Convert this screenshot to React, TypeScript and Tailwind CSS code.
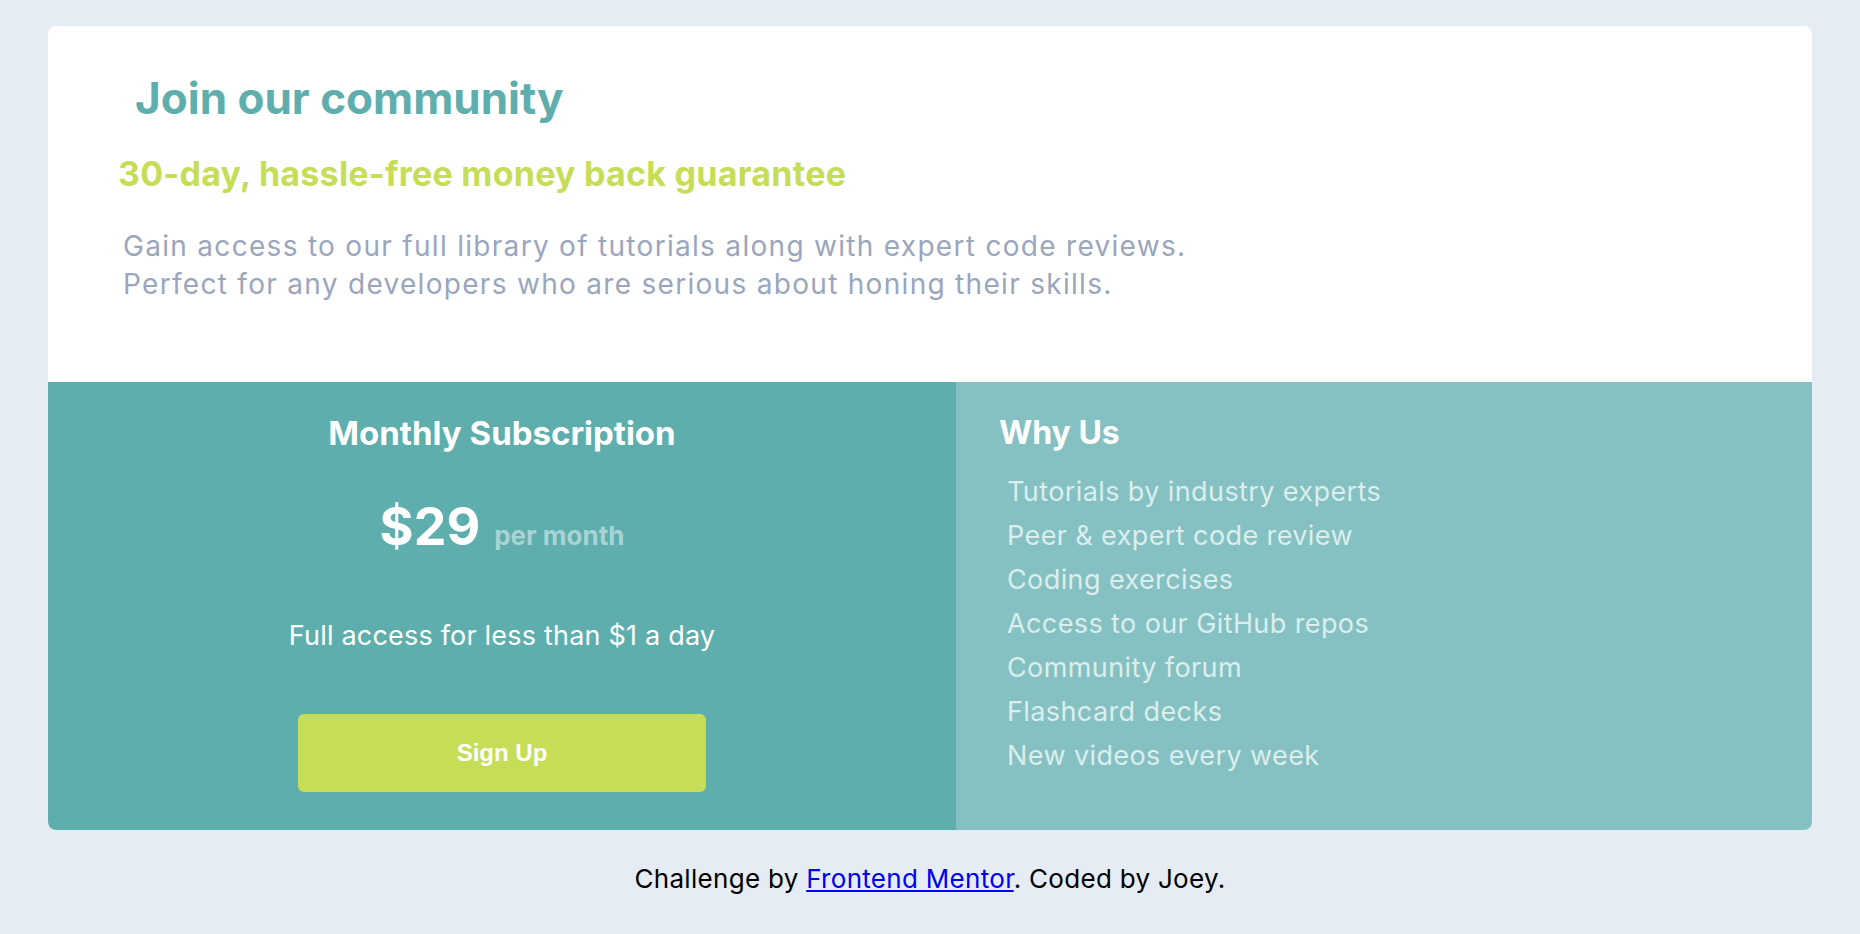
const perks = [
  'Tutorials by industry experts',
  'Peer & expert code review',
  'Coding exercises',
  'Access to our GitHub repos',
  'Community forum',
  'Flashcard decks',
  'New videos every week',
];

const App = () => {
  return (
    <div className="min-h-screen bg-[#e5ecf4] pt-[26px] font-['Inter',sans-serif]">
      <main className="mx-12 overflow-hidden rounded-lg bg-white">
        {/* top intro block */}
        <section className="pt-[46px] pb-[79px]">
          <h1 className="pl-[87px] text-[44px] leading-[53px] font-bold text-[#5eaead]">
            Join our community
          </h1>
          <h2 className="mt-[29px] pl-[70px] text-[34px] leading-[40px] font-bold tracking-[0.25px] text-[#c6dd58]">
            30-day, hassle-free money back guarantee
          </h2>
          <p className="mt-[33px] pl-[75px] text-[28px] leading-[38px] tracking-[1.3px] text-[#9aa6bd]">
            Gain access to our full library of tutorials along with expert code reviews.
            <br />
            Perfect for any developers who are serious about honing their skills.
          </p>
        </section>

        <div className="flex">
          {/* subscription */}
          <section className="flex w-[908px] flex-col items-center bg-[#5eaead] pt-[31px] pb-[38px] text-white">
            <h3 className="text-[33px] leading-[40px] font-bold">Monthly Subscription</h3>
            <div className="mt-[44px] flex items-baseline">
              <span className="text-[52px] leading-[60px] font-bold">$29</span>
              <span className="ml-[14px] text-[26px] leading-[30px] font-bold text-[#a9d4d4]">per month</span>
            </div>
            <p className="mt-[61px] text-[27px] leading-[36px] tracking-[0.2px]">Full access for less than $1 a day</p>
            <button className="mt-[60px] h-[78px] w-[408px] rounded-[6px] bg-[#c6dd58] font-['Liberation_Sans',Arial,sans-serif] text-[24px] font-bold text-white">
              Sign Up
            </button>
          </section>

          {/* why us */}
          <section className="flex-1 bg-[#85c1c2] pt-[31px] pl-[43px]">
            <h3 className="text-[32px] leading-[40px] font-bold text-white">Why Us</h3>
            <ul className="mt-[17px] pl-[8px]">
              {perks.map((p) => (
                <li key={p} className="text-[27px] leading-[44px] tracking-[0.4px] text-[#dbeeed]">
                  {p}
                </li>
              ))}
            </ul>
          </section>
        </div>
      </main>

      <footer className="mt-[31px] text-center text-[26px] leading-[36px] tracking-[0.3px] text-black">
        Challenge by{' '}
        <a href="#" className="text-[#0000ee] underline">
          Frontend Mentor
        </a>
        . Coded by Joey.
      </footer>
    </div>
  );
};

export default App;
